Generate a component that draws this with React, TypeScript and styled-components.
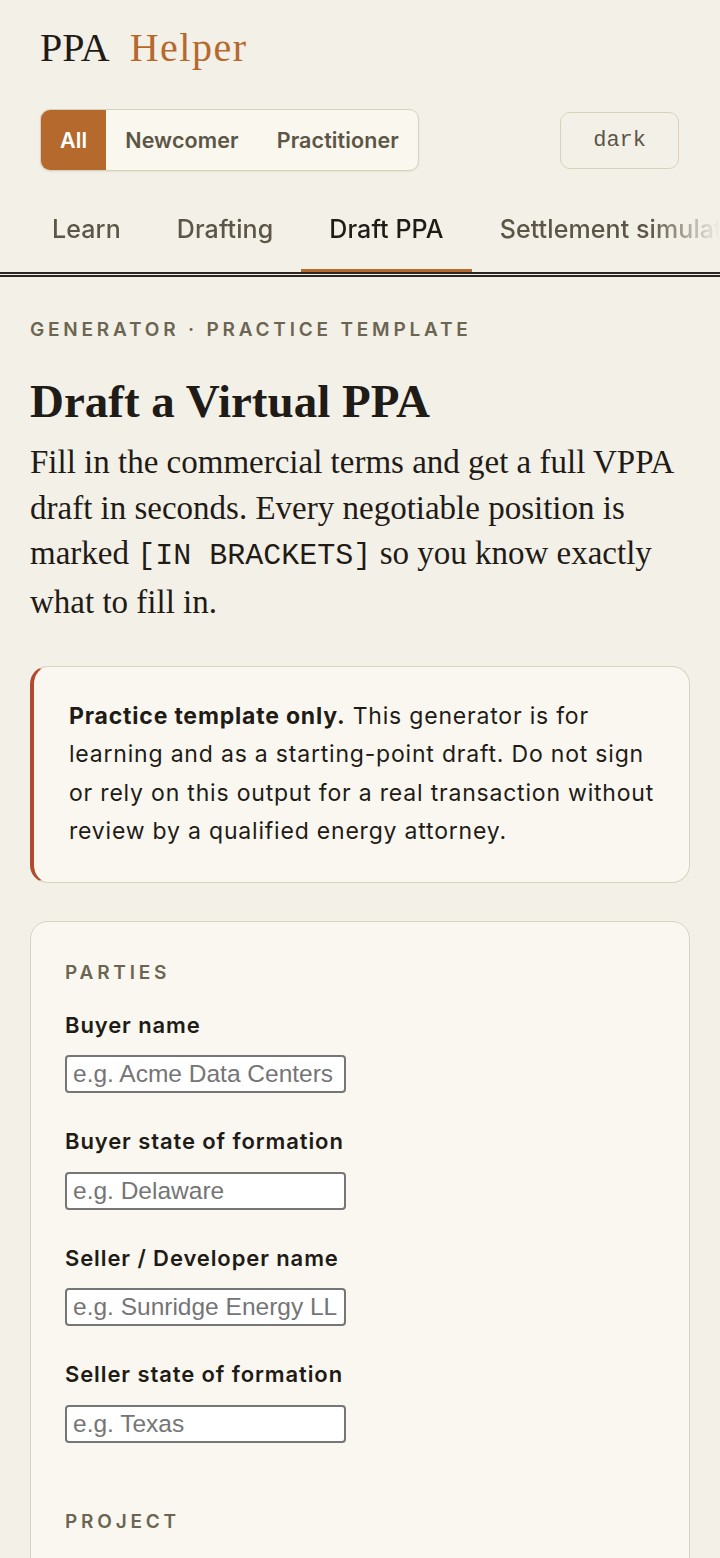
import React from 'react'
import styled, { createGlobalStyle } from 'styled-components'

const GlobalStyle = createGlobalStyle`
  html, body {
    margin: 0;
    padding: 0;
    background: #f3f0e8;
  }
  body {
    font-family: Inter, "Noto Sans", sans-serif;
    color: #1f1b16;
  }
  * {
    box-sizing: border-box;
  }
`

const Header = styled.header`
  padding: 24px 41px 0 40px;
`

const Brand = styled.h1`
  margin: 0;
  font-family: "Liberation Serif", serif;
  font-size: 40px;
  line-height: 48px;
  font-weight: 400;
  display: flex;
  gap: 20px;
  color: #1f1b16;
`

const BrandAccent = styled.span`
  color: #b5692d;
  letter-spacing: 1.5px;
`

const Controls = styled.div`
  margin-top: 37px;
  display: flex;
  align-items: center;
  justify-content: space-between;
`

const Segmented = styled.div`
  display: flex;
  height: 62px;
  border: 1.5px solid #d8d1bc;
  border-radius: 10px;
  background: #faf7ef;
  overflow: hidden;
  box-shadow: 0 1px 2px rgba(60, 50, 30, 0.08);
`

const Segment = styled.button<{ $active?: boolean }>`
  border: none;
  margin: 0;
  padding: 0 19px;
  font-family: Inter, sans-serif;
  font-size: 21.5px;
  letter-spacing: 0.1px;
  font-weight: 600;
  background: ${p => (p.$active ? '#b5692d' : 'transparent')};
  color: ${p => (p.$active ? '#ffffff' : '#5c5646')};
`

const ThemeToggle = styled.button`
  height: 57px;
  padding: 0 32px;
  border: 1.5px solid #d8d1bc;
  border-radius: 10px;
  background: #f3f0e8;
  color: #5c5646;
  font-family: "Liberation Mono", monospace;
  font-size: 22px;
`

const TabBar = styled.nav`
  margin-top: 18px;
  border-bottom: 5px double #2a2520;
  padding-left: 24px;
`

const TabScroll = styled.div`
  display: flex;
  white-space: nowrap;
  overflow: hidden;
  -webkit-mask-image: linear-gradient(to right, #000 90%, transparent 100%);
  mask-image: linear-gradient(to right, #000 90%, transparent 100%);
`

const Tab = styled.div<{ $active?: boolean }>`
  flex: none;
  padding: 25px 28px;
  font-size: 25px;
  letter-spacing: 0.1px;
  line-height: 30px;
  font-weight: 500;
  color: ${p => (p.$active ? '#1f1b16' : '#5c5646')};
  border-bottom: 3px solid ${p => (p.$active ? '#b5692d' : 'transparent')};
`

const Main = styled.main`
  padding: 41px 30px 40px;
`

const Eyebrow = styled.div`
  font-size: 19px;
  line-height: 24px;
  font-weight: 600;
  letter-spacing: 3.8px;
  text-transform: uppercase;
  color: #6b6552;
`

const Title = styled.h2`
  margin: 33px 0 0;
  font-family: "Liberation Serif", serif;
  font-size: 47px;
  line-height: 53px;
  font-weight: 700;
  color: #1f1b16;
`

const Lead = styled.p`
  margin: 12px 0 0;
  font-family: "Liberation Serif", serif;
  font-size: 33px;
  line-height: 45.5px;
  color: #1f1b16;
`

const Code = styled.code`
  font-family: "Liberation Mono", monospace;
  font-size: 0.91em;
`

const Notice = styled.aside`
  margin-top: 41px;
  padding: 30px 30px 31px 35px;
  border: 1.5px solid #d9d3c0;
  border-left: 4px solid #b24a2e;
  border-radius: 18px;
  background: #f9f7f0;
  font-size: 23px;
  letter-spacing: 0.8px;
  line-height: 38.4px;
  color: #1f1b16;

  strong {
    font-weight: 700;
  }
`

const FormCard = styled.section`
  margin-top: 38px;
  padding: 39px 34px 40px;
  border: 1.5px solid #d9d3c0;
  border-radius: 18px;
  background: #f9f7f0;
`

const Section = styled.div`
  display: flex;
  flex-direction: column;

  & + & {
    margin-top: 33px;
  }
`

const SectionLabel = styled.div`
  font-size: 19px;
  line-height: 24px;
  font-weight: 600;
  letter-spacing: 3.8px;
  text-transform: uppercase;
  color: #6b6552;
  margin-bottom: 26px;
`

const Field = styled.label`
  display: flex;
  flex-direction: column;
  align-items: flex-start;
  margin-bottom: 34px;
`

const LabelText = styled.span`
  font-size: 22px;
  letter-spacing: 0.9px;
  line-height: 28px;
  font-weight: 600;
  color: #1f1b16;
  margin-bottom: 16.5px;
`

const TextInput = styled.input`
  width: 281px;
  height: 38px;
  padding: 0 6px;
  border: 2px solid #767676;
  border-radius: 4px;
  background: #ffffff;
  font-family: "Liberation Sans", Arial, sans-serif;
  font-size: 24.5px;
  color: #1f1b16;

  &::placeholder {
    color: #757575;
  }
`

const sections = [
  {
    title: 'Parties',
    fields: [
      { label: 'Buyer name', placeholder: 'e.g. Acme Data Centers' },
      { label: 'Buyer state of formation', placeholder: 'e.g. Delaware' },
      { label: 'Seller / Developer name', placeholder: 'e.g. Sunridge Energy LLC' },
      { label: 'Seller state of formation', placeholder: 'e.g. Texas' },
    ],
  },
  {
    title: 'Project',
    fields: [
      { label: 'Project name', placeholder: 'e.g. Sunridge Solar' },
      { label: 'Technology', placeholder: 'e.g. Solar PV' },
    ],
  },
]

const tabs = ['Learn', 'Drafting', 'Draft PPA', 'Settlement simulator']

export default function App() {
  return (
    <>
      <GlobalStyle />
      <Header>
        <Brand>
          <span>PPA</span>
          <BrandAccent>Helper</BrandAccent>
        </Brand>
        <Controls>
          <Segmented>
            <Segment $active>All</Segment>
            <Segment>Newcomer</Segment>
            <Segment>Practitioner</Segment>
          </Segmented>
          <ThemeToggle>dark</ThemeToggle>
        </Controls>
      </Header>
      <TabBar>
        <TabScroll>
          {tabs.map(t => (
            <Tab key={t} $active={t === 'Draft PPA'}>
              {t}
            </Tab>
          ))}
        </TabScroll>
      </TabBar>
      <Main>
        <Eyebrow>Generator · Practice template</Eyebrow>
        <Title>Draft a Virtual PPA</Title>
        <Lead>
          Fill in the commercial terms and get a full VPPA draft in seconds. Every negotiable
          position is marked <Code>[IN BRACKETS]</Code> so you know exactly what to fill in.
        </Lead>
        <Notice>
          <strong>Practice template only.</strong> This generator is for learning and as a
          starting-point draft. Do not sign or rely on this output for a real transaction
          without review by a qualified energy attorney.
        </Notice>
        <FormCard>
          {sections.map(s => (
            <Section key={s.title}>
              <SectionLabel>{s.title}</SectionLabel>
              {s.fields.map(f => (
                <Field key={f.label}>
                  <LabelText>{f.label}</LabelText>
                  <TextInput type="text" placeholder={f.placeholder} />
                </Field>
              ))}
            </Section>
          ))}
        </FormCard>
      </Main>
    </>
  )
}
